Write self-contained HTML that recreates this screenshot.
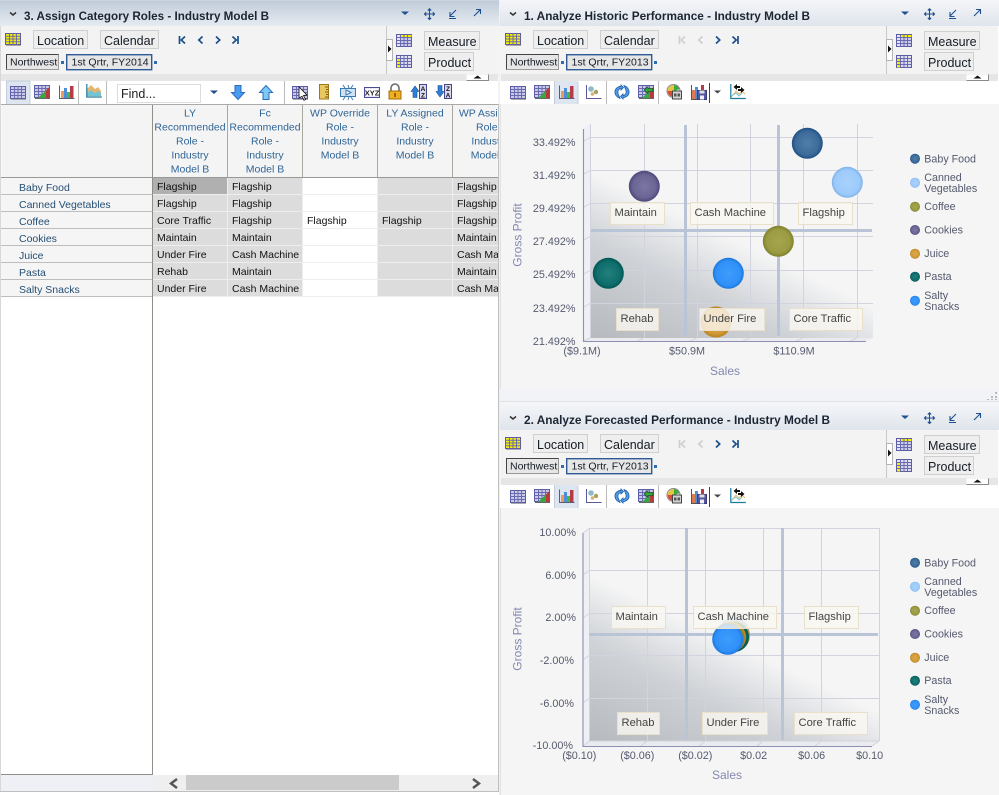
<!DOCTYPE html>
<html><head><meta charset="utf-8"><style>
html,body{margin:0;padding:0;background:#fff;width:999px;height:795px;overflow:hidden}
svg{display:block;font-family:"Liberation Sans",sans-serif}
.tt{font-size:11.8px;font-weight:bold;fill:#1c2533}
.btn{fill:#eeeeee;stroke:#cfcfcf}
.bt{font-size:12.5px;fill:#141c26}
.sm{font-size:10.5px;fill:#141c26}
.hd{font-size:10.5px;fill:#2f6596;text-anchor:middle}
.rl{font-size:10.5px;fill:#244f74}
.ct{font-size:10.5px;fill:#111}
.axm{font-size:10.8px;fill:#555a6e;text-anchor:middle}
.axe{font-size:10.8px;fill:#555a6e;text-anchor:end}
.ti{font-size:12px;fill:#8488b0}
.lb{font-size:11.2px;fill:#444}
.lg{font-size:10.7px;fill:#555a6e}
.gl{stroke:#d2d3df;stroke-width:1;fill:none}
.qd{stroke:#b9c5d7;stroke-width:3;fill:none}
.lbx{fill:#faf8f1;fill-opacity:.8;stroke:#eadfc8}
.axl{stroke:#8d8fb4;stroke-width:1.1;fill:none}
</style></head><body>
<svg width="999" height="795" viewBox="0 0 999 795" xmlns="http://www.w3.org/2000/svg">
<defs>
<linearGradient id="tb1" x1="0" y1="0" x2="0" y2="1"><stop offset="0" stop-color="#bfcbd9"/><stop offset="1" stop-color="#e6ebf1"/></linearGradient>
<linearGradient id="tb2" x1="0" y1="0" x2="0" y2="1"><stop offset="0" stop-color="#f4f5f8"/><stop offset="1" stop-color="#dfe5ec"/></linearGradient>
<linearGradient id="fa" gradientUnits="userSpaceOnUse" x1="590" y1="338" x2="655" y2="202"><stop offset="0" stop-color="#b6babf"/><stop offset=".58" stop-color="#ced1d5"/><stop offset=".81" stop-color="#e2e4e7"/><stop offset="1" stop-color="#f5f5f5"/></linearGradient>
<linearGradient id="fb" gradientUnits="userSpaceOnUse" x1="589" y1="741" x2="654" y2="605"><stop offset="0" stop-color="#b6babf"/><stop offset=".58" stop-color="#ced1d5"/><stop offset=".81" stop-color="#e2e4e7"/><stop offset="1" stop-color="#f5f5f5"/></linearGradient>
<radialGradient id="b1"><stop offset="0" stop-color="#517ea9"/><stop offset=".75" stop-color="#3d6b9a"/><stop offset="1" stop-color="#1f4f85"/></radialGradient>
<radialGradient id="b2"><stop offset="0" stop-color="#a9d2fd"/><stop offset=".8" stop-color="#9ccafb"/><stop offset="1" stop-color="#7fb2ea"/></radialGradient>
<radialGradient id="b3"><stop offset="0" stop-color="#a5a650"/><stop offset=".75" stop-color="#9a9b42"/><stop offset="1" stop-color="#80812a"/></radialGradient>
<radialGradient id="b4"><stop offset="0" stop-color="#7b76a2"/><stop offset=".75" stop-color="#6a6593"/><stop offset="1" stop-color="#4d477d"/></radialGradient>
<radialGradient id="b5"><stop offset="0" stop-color="#dfa94a"/><stop offset=".75" stop-color="#d09a38"/><stop offset="1" stop-color="#b8821f"/></radialGradient>
<radialGradient id="b6"><stop offset="0" stop-color="#21807c"/><stop offset=".75" stop-color="#0f6e6b"/><stop offset="1" stop-color="#005755"/></radialGradient>
<radialGradient id="b7"><stop offset="0" stop-color="#3f9cfc"/><stop offset=".8" stop-color="#2f90f8"/><stop offset="1" stop-color="#1a76dc"/></radialGradient>

<g id="grid"><rect x=".5" y=".5" width="15" height="12" fill="#c9c9ea" stroke="#5c5ca2"/><path d="M.5 3.500h15M.5 6.500h15M.5 9.500h15M4.500.5v12M8 .5v12M11.500.5v12" stroke="#6a6ab0" fill="none"/><path d="M1 13.500h15" stroke="#aaa"/></g>
<g id="gridy"><rect x=".5" y=".5" width="15" height="11" fill="#f4f000" stroke="#5c5ca2"/><path d="M.5 3.200h15M.5 6h15M.5 8.700h15M4.500.5v11M8 .5v11M11.500.5v11" stroke="#6a6ab0" fill="none"/><path d="M1 12.500h15" stroke="#aaa"/></g>
<g id="gridt"><rect x=".5" y=".5" width="15" height="12" fill="#c9c9ea" stroke="#5c5ca2"/><rect x="1" y="1" width="3.500" height="11" fill="#e4e4f4"/><rect x="4.500" y="1" width="11" height="2.400" fill="#f4f000"/><path d="M.5 3.500h15M.5 6.500h15M.5 9.500h15M4.500.5v12M8 .5v12M11.500.5v12" stroke="#6a6ab0" fill="none"/></g>
<g id="gridl"><rect x=".5" y=".5" width="15" height="12" fill="#d8d8f0" stroke="#5c5ca2"/><rect x="1" y="3.500" width="3.500" height="9" fill="#f4f000"/><rect x="1" y="1" width="14" height="2.400" fill="#e4e4f4"/><path d="M.5 3.500h15M.5 6.500h15M.5 9.500h15M4.500.5v12M8 .5v12M11.500.5v12" stroke="#6a6ab0" fill="none"/></g>
<g id="gridc"><rect x=".5" y=".5" width="15" height="12" fill="#c9c9ea" stroke="#5c5ca2"/><path d="M.5 3.500h15M.5 6.500h15M.5 9.500h15M4.500.5v12M8 .5v12M11.500.5v12" stroke="#6a6ab0" fill="none"/><path d="M4 13L15.500 2v11z" fill="#3aa544"/><path d="M12 13V5.500l3.500-3.500v11z" fill="#b83a3a"/><path d="M1 13.500h15" stroke="#666"/></g>
<g id="bars"><path d="M.5 .5v13h15" stroke="#5b5b7e" fill="none"/><rect x="2" y="6" width="3" height="7" fill="#f09a55"/><rect x="5" y="3" width="3" height="10" fill="#4d8ed8"/><rect x="8" y="7" width="3" height="6" fill="#3fbb4a"/><rect x="11" y="1" width="3.500" height="12" fill="#b83a48"/></g>
<g id="area"><path d="M1 12V5l4-4 4 4 3-2 3 4v5z" fill="#e6b56e"/><path d="M1 12V9l4-3 4 3 3-2 3 2v3z" fill="#74c4d2"/><path d="M.8 0v13h15" stroke="#1c7c9c" stroke-width="1.200" fill="none"/></g>
<g id="scat"><path d="M.5 0v13.500h15" stroke="#5a5a9a" fill="none"/><circle cx="5" cy="4" r="2.800" fill="#8fb8c8"/><circle cx="10" cy="7" r="2.200" fill="#a8a060"/><circle cx="6.500" cy="9" r="1.800" fill="#d8b070"/></g>
<g id="refr" stroke="#1c5ca8" stroke-width=".8" fill="#4f9ce6"><path d="M7 1l2.500 2.500L7 6V4.500C4.500 5 3.500 7 4 9.500l2 5C3 13.500 .5 10.500 1 7c.3-2.500 3-4.500 6-4.800z"/><path d="M9 15l-2.500-2.500L9 10v1.500c2.500-.5 3.500-2.500 3-5l-2-5c3 1 5.500 4 5 7.500-.3 2.500-3 4.500-6 4.800z"/></g>
<g id="rev"><use href="#gridc"/><path d="M15 3.500H10V1.500L6 5l4 3.500v-2h5z" fill="#2fa83c" stroke="#14401a" stroke-width=".6"/></g>
<g id="pie"><path d="M8 7V1a6.500 6.500 0 0 1 6 4z" fill="#3fa844"/><path d="M8 7L1.500 7A6.500 6.500 0 0 1 8 1z" fill="#e8c53a"/><path d="M8 7H1.500a6.500 6.500 0 0 0 5 6H8z" fill="#d84a3a"/><circle cx="7.500" cy="7" r="6.500" fill="none" stroke="#888"/><rect x="6.500" y="7" width="9" height="8" fill="#d4d4d4" stroke="#444"/><path d="M8 9.500h2.500v3H8zM11.500 9.500H14v3h-2.500z" fill="#555"/></g>
<g id="save"><rect x="1" y="5" width="3" height="9" fill="#e07a50"/><rect x="4" y="2" width="3" height="12" fill="#5090d8"/><rect x="10" y="0" width="3" height="6" fill="#b83a48"/><path d="M.5 0v14.500h6" stroke="#555" fill="none"/><rect x="6.500" y="5.500" width="9" height="9" fill="#5555a0" stroke="#3c3c80"/><rect x="8.500" y="5.500" width="5" height="3" fill="#ddd"/><rect x="9" y="10.500" width="4" height="4" fill="#eee"/></g>
<g id="swap"><path d="M.8 0v14.500h15" stroke="#1c7c9c" stroke-width="1.200" fill="none"/><path d="M1.500 13L6 7l3 3 3-3 3 3" stroke="#e6b56e" fill="none"/><path d="M2 11.500L6 9l3 3 3-3" stroke="#74c4d2" fill="none"/><path d="M7 0L3.500 3 7 6V4h3V2H7zM11 3l3.500 3L11 9V7H8V5h3z" fill="#111"/></g>
<g id="dn"><path d="M5 .5h6v7h3.500L8 14.500 1.500 7.500H5z" fill="#4a9cf0" stroke="#2a6cc0"/></g>
<g id="up"><path d="M5 14.500h6v-7h3.500L8 .5 1.500 7.500H5z" fill="#7cc8f6" stroke="#2a6cc0"/></g>
<g id="gcur"><use href="#grid"/><path d="M7 1l8 8-3.500.5 2 4-1.500.8-2-4L7 12z" fill="#fff" stroke="#111" stroke-width=".8"/></g>
<g id="rule"><rect x="2.500" y=".5" width="9" height="14.500" fill="#e8c860" stroke="#a07818"/><path d="M8 3h3.500M9 5.500h2.500M8 8h3.500M9 10.500h2.500M8 13h3.500" stroke="#865e10"/></g>
<g id="frz"><rect x=".5" y="3.500" width="15" height="8" fill="#cfe2f4" stroke="#3a78b0"/><path d="M8 0l1 3M8 15l1-3M3 0l2 3M13 0l-2 3M3 15l2-3M13 15l-2-3" stroke="#3a78b0"/><path d="M6 5l5 2.500L6 10z" fill="#fff" stroke="#3a78b0"/></g>
<g id="xyz"><rect x=".5" y="2.500" width="15" height="10" fill="#e8e8f6" stroke="#4c4c96"/><rect x="2" y="4" width="12" height="7" fill="#fff"/></g>
<g id="lock"><path d="M4 7V4a4 4 0 0 1 8 0v3" fill="none" stroke="#6a6a6a" stroke-width="1.600"/><rect x="2" y="7" width="12" height="8" fill="#f0b020" stroke="#a06c10"/><rect x="7.300" y="9" width="1.500" height="4" fill="#7a4a00"/></g>
<g id="titlebtns" fill="none" stroke="#1e4f8f" stroke-width="1.100">
<path d="M401 11.500h8l-4 3.500z" fill="#1e4f8f" stroke="none"/>
<path d="M429.500 9v10.500M424.500 14h10M427.800 10.500l1.700-1.700 1.700 1.700M427.800 17.800l1.700 1.700 1.700-1.700M426.200 12.300l-1.700 1.700 1.700 1.700M432.800 12.300l1.700 1.700-1.700 1.700"/>
<path d="M456 10l-6 6M450 12v4.500h4.500M449 18.500h7"/>
<path d="M474 16l6.500-6.500M476 9.500h4.500V14"/>
</g>
<g id="chev"><path d="M10 12.500l3 2.500 3-2.500" fill="none" stroke="#333" stroke-width="1.500"/></g>
<g id="nav1" fill="none" stroke="#1c4f8a" stroke-width="1.700"><path d="M179.500 36v8M185 36.500l-3.700 3.500 3.700 3.500"/><path d="M202.500 36.500l-3.700 3.500 3.700 3.500"/><path d="M216 36.500l3.700 3.500-3.700 3.500"/><path d="M238 36v8M232.500 36.500l3.700 3.500-3.700 3.500"/></g>
<g id="nav2"><g fill="none" stroke="#cfcfcf" stroke-width="1.700"><path d="M179.500 36v8M185 36.500l-3.700 3.500 3.700 3.500"/><path d="M202.500 36.500l-3.700 3.500 3.700 3.500"/></g><g fill="none" stroke="#1c4f8a" stroke-width="1.700"><path d="M216 36.500l3.700 3.500-3.700 3.500"/><path d="M238 36v8M232.500 36.500l3.700 3.500-3.700 3.500"/></g></g>
<g id="hdrframe">
<rect x="1" y="26" width="497" height="48" fill="#f3f3f3"/>
<rect x="1" y="74" width="497" height="7" fill="#e6e6e6"/>
<rect x="1" y="81" width="497" height="23" fill="#fff"/>
<use href="#gridy" x="5" y="33"/>
<rect class="btn" x="33.500" y="30.500" width="54" height="18"/>
<rect class="btn" x="100.500" y="30.500" width="58" height="18"/>
<rect x="6.500" y="54.500" width="52" height="15" fill="#e6e6e6" stroke="#9a9a9a"/><path d="M6.500 69.500v-15h52" stroke="#444" fill="none"/>
<rect x="61" y="61" width="3" height="3" fill="#2f6cb0"/>
<rect x="66.700" y="54.700" width="85" height="15" fill="#e6e6e6" stroke="#2f5a96" stroke-width="1.400"/>
<rect x="154" y="61" width="3" height="3" fill="#2f6cb0"/>
<path d="M386.500 26v48" stroke="#c8c8c8"/>
<rect x="386.500" y="39.500" width="6" height="21" fill="#fff" stroke="#b4b4b4"/>
<path d="M388 45.500l3.500 3.500-3.500 3.500z" fill="#111"/>
<use href="#gridt" x="396" y="34"/>
<use href="#gridl" x="396" y="55"/>
<rect class="btn" x="424.500" y="31.500" width="55" height="18"/>
<rect class="btn" x="424.500" y="52.500" width="49" height="18"/>
<rect x="466.500" y="74.500" width="22" height="6" fill="#fff"/><path d="M466.500 80.500h22v-6" stroke="#8a8a8a" fill="none"/>
<path d="M473.500 78.500l4-3 4 3z" fill="#111"/>
</g>
<g id="rtools">
<rect x="554" y="81" width="24" height="23" fill="#dde6f0"/><path d="M554.500 104v-23M578 82v22" stroke="#c4cedb"/>
<use href="#grid" x="510" y="86"/><use href="#gridc" x="534" y="85"/><use href="#bars" x="559" y="85"/><use href="#scat" x="586" y="85"/>
<path d="M606.500 81v23" stroke="#bbb"/>
<use href="#refr" x="614" y="84"/><use href="#rev" x="638" y="85"/>
<path d="M658.500 81v23" stroke="#bbb"/>
<use href="#pie" x="666" y="84"/><use href="#save" x="691" y="85"/>
<path d="M709.500 83v20" stroke="#444"/>
<path d="M714 90.500h7l-3.500 3z" fill="#444"/>
<use href="#swap" x="730" y="84"/>
</g>
<g id="legend">
<circle cx="915" cy="158.700" r="5" fill="url(#b1)"/><circle cx="915" cy="182.700" r="5" fill="url(#b2)"/><circle cx="915" cy="206.700" r="5" fill="url(#b3)"/><circle cx="915" cy="230" r="5" fill="url(#b4)"/><circle cx="915" cy="253.700" r="5" fill="url(#b5)"/><circle cx="915" cy="276.700" r="5" fill="url(#b6)"/><circle cx="915" cy="300.700" r="5" fill="url(#b7)"/>
</g>
</defs>

<rect width="999" height="795" fill="#f5f5f5"/>
<!-- LEFT PANEL -->
<rect x="0" y="0" width="499" height="26" fill="url(#tb1)"/>
<path d="M0 .5h499" stroke="#ccd5df" />
<rect x="0" y="26" width="1" height="769" fill="#d8d8d8"/>
<rect x="1" y="104" width="497" height="688" fill="#fff"/>
<use href="#hdrframe"/>
<use href="#chev"/><use href="#titlebtns"/><use href="#nav1"/>
<text class="tt" x="24" y="20" textLength="245" lengthAdjust="spacingAndGlyphs">3. Assign Category Roles - Industry Model B</text>
<text class="bt" x="37" y="45">Location</text><text class="bt" x="104" y="45">Calendar</text>
<text class="sm" x="10" y="65.500">Northwest</text><text class="sm" x="71.500" y="65.500">1st Qrtr, FY2014</text>
<text class="bt" x="428" y="46">Measure</text><text class="bt" x="428" y="67">Product</text>
<!-- left toolbar -->
<rect x="6" y="81" width="24" height="23" fill="#dde6f0"/><path d="M6.500 104V81h23.500V104" stroke="#c4cedb" fill="none"/>
<use href="#grid" x="10" y="86"/><use href="#gridc" x="34" y="85"/><use href="#bars" x="59" y="85"/>
<path d="M78.500 81v23M106.500 81v23M284.500 81v23" stroke="#bbb"/>
<use href="#area" x="86" y="84"/>
<rect x="117.500" y="84.500" width="83" height="18" fill="#fff" stroke="#dcdcdc"/>
<text x="121" y="98" style="font-size:12.5px" fill="#222">Find...</text>
<path d="M210 90.500h8l-4 3.500z" fill="#1e4f8f"/>
<use href="#dn" x="230" y="85"/><use href="#up" x="258" y="85"/>
<use href="#gcur" x="292" y="86"/><use href="#rule" x="317" y="84"/><use href="#frz" x="340" y="85"/><use href="#xyz" x="364" y="85"/>
<text x="372" y="95.500" text-anchor="middle" style="font-size:7.500px;font-weight:bold" fill="#222">XYZ</text>
<use href="#lock" x="387" y="84"/>
<path d="M411 91.500L415 86l4 5.500h-2v6h-4v-6z" fill="#2f7fd8" stroke="#15508e" stroke-width=".6"/><rect x="419.500" y="84.500" width="7" height="14" fill="#d8d8ee" stroke="#45458c"/>
<text x="423" y="91" text-anchor="middle" style="font-size:6.500px;font-weight:bold" fill="#111">A</text><text x="423" y="97.500" text-anchor="middle" style="font-size:6.500px;font-weight:bold" fill="#111">Z</text>
<path d="M436 91.500L440 97l4-5.500h-2v-6h-4v6z" fill="#2f7fd8" stroke="#15508e" stroke-width=".6"/><rect x="444.500" y="84.500" width="7" height="14" fill="#d8d8ee" stroke="#45458c"/>
<text x="448" y="91" text-anchor="middle" style="font-size:6.500px;font-weight:bold" fill="#111">Z</text><text x="448" y="97.500" text-anchor="middle" style="font-size:6.500px;font-weight:bold" fill="#111">A</text>

<!-- table -->
<rect x="1.500" y="104.500" width="496" height="73" fill="#f4f4f4"/>
<path d="M1 104.500h497" stroke="#aaa"/>
<path d="M227.500 105v72M302.500 105v72M377.500 105v72M452.500 105v72" stroke="#a8a8a0"/>
<path d="M1 177.500h497" stroke="#9a9a94"/>
<rect x="1" y="178" width="151" height="119" fill="#f5f5f5"/>
<path d="M1 194.500h151M1 211.500h151M1 228.500h151M1 245.500h151M1 262.500h151M1 279.500h151M1 296.500h151" stroke="#bdbdbd"/>
<rect x="153" y="178" width="74" height="118" fill="#dcdcdc"/>
<rect x="228" y="178" width="74" height="118" fill="#dcdcdc"/>
<rect x="378" y="178" width="74" height="118" fill="#dcdcdc"/>
<rect x="453" y="178" width="45" height="118" fill="#dcdcdc"/>
<rect x="153" y="178" width="74" height="16" fill="#b0b0b0"/>
<path d="M153 194.500h345M153 211.500h345M153 228.500h345M153 245.500h345M153 262.500h345M153 279.500h345" stroke="#eeeeee"/>
<path d="M227.500 178v118M302.500 178v118M377.500 178v118M452.500 178v118" stroke="#eeeeee"/>
<path d="M152.500 105v669.500H1" stroke="#8f8f88" fill="none"/>
<path d="M153 296.500h345" stroke="#eeeeee"/>
<text class="hd" x="190" y="116.500">LY</text><text class="hd" x="190" y="130.500">Recommended</text><text class="hd" x="190" y="144.500">Role -</text><text class="hd" x="190" y="158.500">Industry</text><text class="hd" x="190" y="172.500">Model B</text>
<text class="hd" x="265" y="116.500">Fc</text><text class="hd" x="265" y="130.500">Recommended</text><text class="hd" x="265" y="144.500">Role -</text><text class="hd" x="265" y="158.500">Industry</text><text class="hd" x="265" y="172.500">Model B</text>
<text class="hd" x="340" y="116.500">WP Override</text><text class="hd" x="340" y="130.500">Role -</text><text class="hd" x="340" y="144.500">Industry</text><text class="hd" x="340" y="158.500">Model B</text>
<text class="hd" x="415" y="116.500">LY Assigned</text><text class="hd" x="415" y="130.500">Role -</text><text class="hd" x="415" y="144.500">Industry</text><text class="hd" x="415" y="158.500">Model B</text>
<svg x="453" y="105" width="45" height="72"><g transform="translate(-453,-105)"><text class="hd" x="490" y="116.500">WP Assigned</text><text class="hd" x="490" y="130.500">Role -</text><text class="hd" x="490" y="144.500">Industry</text><text class="hd" x="490" y="158.500">Model B</text></g></svg>

<text class="rl" x="19" y="191">Baby Food</text><text class="rl" x="19" y="208">Canned Vegetables</text><text class="rl" x="19" y="225">Coffee</text><text class="rl" x="19" y="242">Cookies</text><text class="rl" x="19" y="259">Juice</text><text class="rl" x="19" y="276">Pasta</text><text class="rl" x="19" y="293">Salty Snacks</text>

<text class="ct" x="157" y="190">Flagship</text><text class="ct" x="157" y="207">Flagship</text><text class="ct" x="157" y="224">Core Traffic</text><text class="ct" x="157" y="241">Maintain</text><text class="ct" x="157" y="258">Under Fire</text><text class="ct" x="157" y="275">Rehab</text><text class="ct" x="157" y="292">Under Fire</text>
<text class="ct" x="232" y="190">Flagship</text><text class="ct" x="232" y="207">Flagship</text><text class="ct" x="232" y="224">Flagship</text><text class="ct" x="232" y="241">Maintain</text><text class="ct" x="232" y="258">Cash Machine</text><text class="ct" x="232" y="275">Maintain</text><text class="ct" x="232" y="292">Cash Machine</text>
<text class="ct" x="307" y="224">Flagship</text><text class="ct" x="382" y="224">Flagship</text>
<svg x="453" y="178" width="45" height="118"><g transform="translate(-453,-178)"><text class="ct" x="457" y="190">Flagship</text><text class="ct" x="457" y="207">Flagship</text><text class="ct" x="457" y="224">Flagship</text><text class="ct" x="457" y="241">Maintain</text><text class="ct" x="457" y="258">Cash Machine</text><text class="ct" x="457" y="275">Maintain</text><text class="ct" x="457" y="292">Cash Machine</text></g></svg>

<!-- scrollbar -->
<rect x="1" y="775" width="152" height="16" fill="#eef0f5"/>
<rect x="153" y="775" width="345" height="16" fill="#efefef"/>
<rect x="186" y="775" width="213" height="15" fill="#cbcbcb"/>
<path d="M177 779l-6 4.500 6 4.500" fill="none" stroke="#555" stroke-width="2.400"/>
<path d="M473 779l6 4.500-6 4.500" fill="none" stroke="#555" stroke-width="2.400"/>
<path d="M0 791.500h499M498.500 104v688" stroke="#bfbfbf"/>
<rect x="0" y="792" width="499" height="3" fill="#fff"/>
<rect x="499" y="0" width="1" height="795" fill="#f0f0f0"/>

<!-- PANEL 1 -->
<rect x="500" y="0" width="499" height="26" fill="url(#tb2)"/>
<g transform="translate(500,0)"><use href="#hdrframe"/><use href="#chev"/><use href="#titlebtns"/><use href="#nav2"/>
<text class="tt" x="24" y="20" textLength="286" lengthAdjust="spacingAndGlyphs">1. Analyze Historic Performance - Industry Model B</text>
<text class="bt" x="37" y="45">Location</text><text class="bt" x="104" y="45">Calendar</text>
<text class="sm" x="10" y="65.500">Northwest</text><text class="sm" x="71.500" y="65.500">1st Qrtr, FY2013</text>
<text class="bt" x="428" y="46">Measure</text><text class="bt" x="428" y="67">Product</text></g>
<rect x="998" y="26" width="1" height="78" fill="#fff"/>
<rect x="500" y="81" width="499" height="23" fill="#fff"/>
<use href="#rtools"/>
<rect x="500" y="104" width="499" height="285" fill="#f5f5f5"/>
<rect x="500" y="104" width="1" height="285" fill="#e2e2e2"/>
<rect x="500" y="389" width="499" height="12" fill="#f1f3f7"/>
<path d="M500 401.500h499" stroke="#dfe1e5"/>
<path d="M995 392h2v2h-2zM991 396h2v2h-2zM995 396h2v2h-2zM987 399h2v1h-2zM991 399h2v1h-2zM995 399h2v1h-2z" fill="#b5b9c2"/>

<!-- chart 1 -->
<path d="M583 129l7-5v214l-7 3z" fill="#eef0f3"/><path d="M583 341l7-3h283l-7 3z" fill="#e9ebee"/>
<rect x="590" y="125" width="283" height="213" fill="url(#fa)"/>
<path class="gl" d="M590 137.500h283M590 170.500h283M590 203.500h283M590 236.500h283M590 270.500h283M590 303.500h283M590.500 124v214M644.500 124v214M697.500 124v214M750.500 124v214M803.500 124v214M857.500 124v214"/>
<path class="gl" d="M590 137.500l-7 4M590 170.500l-7 4M590 203.500l-7 4M590 236.500l-7 4M590 270.500l-7 4M590 303.500l-7 4M590 338l-7 3M644 338l-7 3M697 338l-7 3M750 338l-7 3M803 338l-7 3M857 338l-7 3"/>
<path class="axl" d="M583.500 129v212.500H866"/>
<path class="qd" d="M685.500 125v211M778.500 125v211M591 230.500h281"/>
<svg x="590" y="120" width="290" height="218"><g transform="translate(-590,-120)"><circle cx="716" cy="322" r="15.500" fill="url(#b5)"/></g></svg>
<circle cx="807.300" cy="143.300" r="15.500" fill="url(#b1)"/><circle cx="847.300" cy="182.300" r="15.500" fill="url(#b2)"/><circle cx="778.300" cy="241.300" r="15.500" fill="url(#b3)"/><circle cx="644.300" cy="186.300" r="15.500" fill="url(#b4)"/><circle cx="608.300" cy="273.300" r="15.500" fill="url(#b6)"/><circle cx="728.300" cy="273.300" r="15.500" fill="url(#b7)"/>
<rect class="lbx" x="610.500" y="202.500" width="54" height="22"/><rect class="lbx" x="690.500" y="202.500" width="83" height="22"/><rect class="lbx" x="798.500" y="202.500" width="54" height="22"/>
<rect class="lbx" x="616.500" y="308.500" width="42" height="22"/><rect class="lbx" x="699.500" y="308.500" width="65" height="22"/><rect class="lbx" x="789.500" y="308.500" width="73" height="22"/>
<text class="lb" x="614.500" y="216">Maintain</text><text class="lb" x="694.500" y="216">Cash Machine</text><text class="lb" x="802.500" y="216">Flagship</text>
<text class="lb" x="620.500" y="322">Rehab</text><text class="lb" x="703.500" y="322">Under Fire</text><text class="lb" x="793.500" y="322">Core Traffic</text>
<text class="axe" x="575.500" y="146">33.492%</text><text class="axe" x="575.500" y="179">31.492%</text><text class="axe" x="575.500" y="212">29.492%</text><text class="axe" x="575.500" y="245">27.492%</text><text class="axe" x="575.500" y="278">25.492%</text><text class="axe" x="575.500" y="312">23.492%</text><text class="axe" x="575.500" y="345">21.492%</text>
<text class="axm" x="582" y="354.500">($9.1M)</text><text class="axm" x="687" y="354.500">$50.9M</text><text class="axm" x="794" y="354.500">$110.9M</text>
<text class="ti" x="725" y="375" text-anchor="middle">Sales</text>
<text class="ti" x="521.500" y="235" text-anchor="middle" transform="rotate(-90 521.500 235)">Gross Profit</text>
<use href="#legend"/>
<text class="lg" x="924.300" y="162.500">Baby Food</text><text class="lg" x="924.300" y="181">Canned</text><text class="lg" x="924.300" y="192">Vegetables</text><text class="lg" x="924.300" y="210">Coffee</text><text class="lg" x="924.300" y="233.500">Cookies</text><text class="lg" x="924.300" y="257">Juice</text><text class="lg" x="924.300" y="280">Pasta</text><text class="lg" x="924.300" y="299">Salty</text><text class="lg" x="924.300" y="310">Snacks</text>

<!-- PANEL 2 -->
<rect x="500" y="404" width="499" height="26" fill="url(#tb2)"/>
<g transform="translate(500,404)"><use href="#hdrframe"/><use href="#chev"/><use href="#titlebtns"/><use href="#nav2"/>
<text class="tt" x="24" y="20" textLength="306" lengthAdjust="spacingAndGlyphs">2. Analyze Forecasted Performance - Industry Model B</text>
<text class="bt" x="37" y="45">Location</text><text class="bt" x="104" y="45">Calendar</text>
<text class="sm" x="10" y="65.500">Northwest</text><text class="sm" x="71.500" y="65.500">1st Qrtr, FY2013</text>
<text class="bt" x="428" y="46">Measure</text><text class="bt" x="428" y="67">Product</text></g>
<rect x="998" y="430" width="1" height="78" fill="#fff"/>
<rect x="500" y="485" width="499" height="23" fill="#fff"/>
<g transform="translate(0,404)"><use href="#rtools"/></g>
<rect x="500" y="508" width="499" height="287" fill="#f5f5f5"/>
<rect x="500" y="508" width="1" height="287" fill="#e2e2e2"/>

<!-- chart 2 -->
<path d="M583 533l6-5v213l-6 5z" fill="#eef0f3"/><path d="M583 746l6-5h290l-7 5z" fill="#e9ebee"/>
<rect x="589" y="528" width="290" height="213" fill="url(#fb)"/>
<path class="gl" d="M589 528.500h290M589 570.500h290M589 613.500h290M589 655.500h290M589 698.500h290M589 741h290M589.500 528v213M647.500 528v213M705.500 528v213M763.500 528v213M821.500 528v213M879.500 528v213"/>
<path class="gl" d="M589 528.500l-6 4.500M589 570.500l-6 4.500M589 613.500l-6 4.500M589 655.500l-6 4.500M589 698.500l-6 4.500M589 741l-6 5M647 741l-6 5M705 741l-6 5M763 741l-6 5M821 741l-6 5M879 741l-7 5"/>
<path class="axl" d="M583 533v213.500H872"/>
<path class="qd" d="M686.500 528v212M782.500 528v212M589 634.500h289"/>
<circle cx="734" cy="633" r="15.500" fill="url(#b2)"/><circle cx="733.500" cy="636" r="15.500" fill="#c9c9c0"/><circle cx="735" cy="636" r="15" fill="url(#b5)" opacity=".8"/><circle cx="734" cy="637" r="15" fill="url(#b6)"/><circle cx="731" cy="637" r="15" fill="url(#b5)"/><circle cx="729" cy="638" r="15.500" fill="url(#b3)"/>
<circle cx="727.700" cy="639.300" r="15.500" fill="url(#b7)"/>
<rect class="lbx" x="611.500" y="606.500" width="54" height="22"/><rect class="lbx" x="693.500" y="606.500" width="83" height="22"/><rect class="lbx" x="804.500" y="606.500" width="54" height="22"/>
<rect class="lbx" x="617.500" y="712.500" width="42" height="22"/><rect class="lbx" x="702.500" y="712.500" width="65" height="22"/><rect class="lbx" x="794.500" y="712.500" width="73" height="22"/>
<text class="lb" x="615.500" y="620">Maintain</text><text class="lb" x="697.500" y="620">Cash Machine</text><text class="lb" x="808.500" y="620">Flagship</text>
<text class="lb" x="621.500" y="726">Rehab</text><text class="lb" x="706.500" y="726">Under Fire</text><text class="lb" x="798.500" y="726">Core Traffic</text>
<text class="axe" x="576" y="536">10.00%</text><text class="axe" x="576" y="579">6.00%</text><text class="axe" x="576" y="621">2.00%</text><text class="axe" x="574" y="664">-2.00%</text><text class="axe" x="574" y="707">-6.00%</text><text class="axe" x="573" y="749">-10.00%</text>
<text class="axm" x="579.300" y="759">($0.10)</text><text class="axm" x="637.300" y="759">($0.06)</text><text class="axm" x="695.300" y="759">($0.02)</text><text class="axm" x="753.700" y="759">$0.02</text><text class="axm" x="811.700" y="759">$0.06</text><text class="axm" x="869.700" y="759">$0.10</text>
<text class="ti" x="727" y="779" text-anchor="middle">Sales</text>
<text class="ti" x="521.500" y="639" text-anchor="middle" transform="rotate(-90 521.500 639)">Gross Profit</text>
<g transform="translate(0,404)"><use href="#legend"/></g>
<text class="lg" x="924.300" y="566.500">Baby Food</text><text class="lg" x="924.300" y="585">Canned</text><text class="lg" x="924.300" y="596">Vegetables</text><text class="lg" x="924.300" y="614">Coffee</text><text class="lg" x="924.300" y="637.500">Cookies</text><text class="lg" x="924.300" y="661">Juice</text><text class="lg" x="924.300" y="684">Pasta</text><text class="lg" x="924.300" y="703">Salty</text><text class="lg" x="924.300" y="714">Snacks</text>
</svg>
</body></html>
